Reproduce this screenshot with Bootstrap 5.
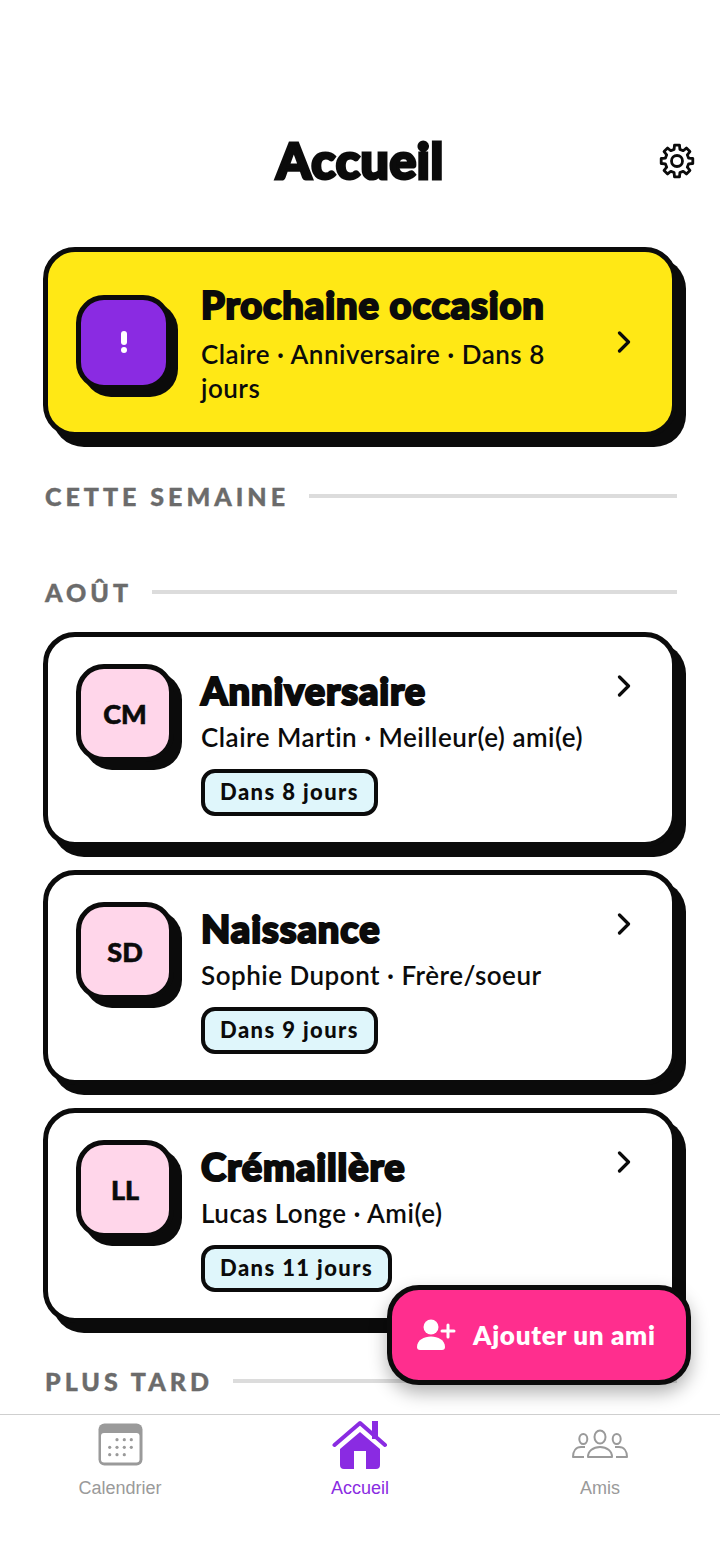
<!DOCTYPE html>
<html lang="fr">
<head>
  <meta charset="UTF-8">
  <meta name="viewport" content="width=device-width, initial-scale=1.0">
  <title>Accueil</title>
  <link href="https://cdn.jsdelivr.net/npm/bootstrap@5.3.3/dist/css/bootstrap.min.css" rel="stylesheet">
  <script src="https://cdn.jsdelivr.net/npm/bootstrap@5.3.3/dist/js/bootstrap.bundle.min.js"></script>
  <style>
    body { font-family: "Lato", "Noto Sans", sans-serif; color: #0b0b0b; background: #fff; }
    .app-shell { width: 720px; height: 1565px; }
    .app-scroll { height: 1414px; padding: 0 43px 0 43px; }

    .heavy { font-family: "Lato", sans-serif; font-weight: 900; color: #0b0b0b; }
    .top-bar { height: 247px; padding-top: 130px; }
    .top-title { font-size: 50px; line-height: 60px; letter-spacing: 0.6px; margin: 0; -webkit-text-stroke: 3px #0b0b0b; }
    .gear-btn { position: absolute; right: 25px; top: 143px; }

    .occ-card { width: 634px; border: 5px solid #0b0b0b; border-radius: 32px; box-shadow: 9px 10px 0 #0b0b0b; background: #fff; padding: 27px 27px 27px 28px; gap: 27px; }
    .occ-next { background: #ffe815; height: 190px; padding-top: 0; padding-bottom: 0; gap: 30px; align-items: center; }
    .occ-item { height: 215px; margin-bottom: 23px; align-items: flex-start; }
    .occ-body { flex: 1 1 0; min-width: 0; }
    .occ-title { font-size: 38px; line-height: 40px; margin: 0; letter-spacing: 0.9px; -webkit-text-stroke: 2.2px #0b0b0b; }
    .occ-sub { font-size: 26px; line-height: 34px; font-weight: 600; margin: 0; letter-spacing: 0.5px; }
    .occ-next .occ-body { padding-top: 5px; }
    .occ-next .occ-title { margin-bottom: 13px; }
    .occ-item .occ-title { margin-bottom: 10px; padding-top: 6px; }
    .occ-chevron { flex: none; width: 14px; margin-right: 14px; }
    .occ-item .occ-chevron { margin-top: 11px; margin-left: -16px; }

    .avatar-box { flex: none; width: 98px; height: 98px; padding-top: 3px; border: 5px solid #0b0b0b; border-radius: 28px; box-shadow: 8px 8px 0 #0b0b0b; background: #ffd6ea; font-size: 27px; font-weight: 900; -webkit-text-stroke: 0.6px #0b0b0b; }
    .avatar-alert { width: 95px; height: 95px; padding-top: 0; background: #8a2be2; box-shadow: 7px 7px 0 #0b0b0b; }

    .due-tag { display: inline-block; height: 47px; margin-top: 15px; padding: 0 15px; border: 4px solid #0b0b0b; border-radius: 14px; background: #dff6fb; font-size: 22px; line-height: 38px; font-weight: 900; letter-spacing: 1.4px; }

    .sect-head { font-size: 25px; line-height: 30px; font-weight: 900; letter-spacing: 4px; color: #6b6b6b; margin: 0; padding-left: 2px; gap: 20px; width: 634px; -webkit-text-stroke: 0.4px #6b6b6b; }
    .sect-rule { flex: 1 1 0; height: 4px; background: #dcdcdc; }
    .sect-week { margin-top: 44px; margin-bottom: 66px; }
    .sect-month { margin-bottom: 25px; }
    .sect-later { margin-top: 43px; }

    .add-friend { position: absolute; left: 387px; top: 1285px; width: 304px; height: 100px; border: 5px solid #0b0b0b; border-radius: 32px; background: #ff2e8e; color: #fff; font-size: 26px; font-weight: 800; letter-spacing: 0.7px; box-shadow: 0 8px 18px rgba(0,0,0,.3); gap: 16px; padding-left: 25px; }
    .add-friend:hover { background: #ff2e8e; color: #fff; border-color: #0b0b0b; }

    .tab-bar { height: 151px; border-top: 1px solid #cfcfcf; background: #fff; position: relative; }
    .tab-item { width: 240px; font-family: "Liberation Sans", sans-serif; font-size: 18px; line-height: 22px; color: #9a9a9a; text-decoration: none; }
    .tab-icon { height: 62px; }
    .tab-friends { padding-top: 13px; }
    .tab-active { color: #8a2be2; }
  </style>
</head>
<body>
  <div class="app-shell position-relative overflow-hidden">
    <div class="app-scroll overflow-hidden">
      <header class="top-bar text-center">
        <h1 class="top-title heavy">Accueil</h1>
      </header>
      <a class="gear-btn" href="#" aria-label="Réglages">
        <svg width="36" height="36" viewBox="0 0 36 36" fill="none" stroke="#0b0b0b" stroke-width="2.8" stroke-linejoin="round">
          <polygon points="15.1,6.36 15.5,2.2 20.5,2.2 20.9,6.36 24.18,7.71 27.4,5.06 30.94,8.6 28.29,11.82 29.64,15.1 33.8,15.5 33.8,20.5 29.64,20.9 28.29,24.18 30.94,27.4 27.4,30.94 24.18,28.29 20.9,29.64 20.5,33.8 15.5,33.8 15.1,29.64 11.82,28.29 8.6,30.94 5.06,27.4 7.71,24.18 6.36,20.9 2.2,20.5 2.2,15.5 6.36,15.1 7.71,11.82 5.06,8.6 8.6,5.06 11.82,7.71"/>
          <circle cx="18" cy="18" r="5.5"/>
        </svg>
      </a>

      <div class="occ-card occ-next d-flex">
        <div class="avatar-box avatar-alert d-flex align-items-center justify-content-center">
          <svg width="8" height="22" viewBox="0 0 8 22" fill="#fff"><rect x="1" y="0" width="6" height="14" rx="3"/><circle cx="4" cy="19" r="3"/></svg>
        </div>
        <div class="occ-body">
          <h2 class="occ-title heavy">Prochaine occasion</h2>
          <p class="occ-sub">Claire · Anniversaire · Dans 8 jours</p>
        </div>
        <svg class="occ-chevron" width="14" height="22" viewBox="0 0 14 22" fill="none" stroke="#0b0b0b" stroke-width="3.2" stroke-linecap="round" stroke-linejoin="round"><path d="M2.5 2 L11.5 11 L2.5 20"/></svg>
      </div>

      <div class="sect-head sect-week d-flex align-items-center"><span>CETTE SEMAINE</span><span class="sect-rule"></span></div>
      <div class="sect-head sect-month d-flex align-items-center"><span>AOÛT</span><span class="sect-rule"></span></div>

      <div class="occ-card occ-item d-flex">
        <div class="avatar-box d-flex align-items-center justify-content-center">CM</div>
        <div class="occ-body">
          <h2 class="occ-title heavy">Anniversaire</h2>
          <p class="occ-sub">Claire Martin · Meilleur(e) ami(e)</p>
          <span class="due-tag">Dans 8 jours</span>
        </div>
        <svg class="occ-chevron" width="14" height="22" viewBox="0 0 14 22" fill="none" stroke="#0b0b0b" stroke-width="3.2" stroke-linecap="round" stroke-linejoin="round"><path d="M2.5 2 L11.5 11 L2.5 20"/></svg>
      </div>

      <div class="occ-card occ-item d-flex">
        <div class="avatar-box d-flex align-items-center justify-content-center">SD</div>
        <div class="occ-body">
          <h2 class="occ-title heavy">Naissance</h2>
          <p class="occ-sub">Sophie Dupont · Frère/soeur</p>
          <span class="due-tag">Dans 9 jours</span>
        </div>
        <svg class="occ-chevron" width="14" height="22" viewBox="0 0 14 22" fill="none" stroke="#0b0b0b" stroke-width="3.2" stroke-linecap="round" stroke-linejoin="round"><path d="M2.5 2 L11.5 11 L2.5 20"/></svg>
      </div>

      <div class="occ-card occ-item d-flex">
        <div class="avatar-box d-flex align-items-center justify-content-center">LL</div>
        <div class="occ-body">
          <h2 class="occ-title heavy">Crémaillère</h2>
          <p class="occ-sub">Lucas Longe · Ami(e)</p>
          <span class="due-tag">Dans 11 jours</span>
        </div>
        <svg class="occ-chevron" width="14" height="22" viewBox="0 0 14 22" fill="none" stroke="#0b0b0b" stroke-width="3.2" stroke-linecap="round" stroke-linejoin="round"><path d="M2.5 2 L11.5 11 L2.5 20"/></svg>
      </div>

      <div class="sect-head sect-later d-flex align-items-center"><span>PLUS TARD</span><span class="sect-rule"></span></div>
    </div>

    <button type="button" class="btn add-friend d-flex align-items-center">
      <svg width="40" height="32" viewBox="0 0 40 32" fill="#fff"><circle cx="14" cy="8" r="7.5"/><path d="M0 28 C0 21 7 17.5 14 17.5 C21 17.5 28 21 28 28 Q28 31 25 31 H3 Q0 31 0 28 Z"/><path d="M31 6 V18 M25 12 H37" stroke="#fff" stroke-width="3" stroke-linecap="round"/></svg>
      <span>Ajouter un ami</span>
    </button>

    <nav class="tab-bar d-flex">
      <a class="tab-item d-flex flex-column align-items-center" href="#">
        <span class="tab-icon d-flex align-items-start pt-2">
          <svg width="45" height="43" viewBox="0 0 45 43"><rect x="0.5" y="0.5" width="44" height="42" rx="6" fill="#9a9a9a"/><rect x="3" y="10" width="38.5" height="29.5" rx="3" fill="#fff"/><g fill="#9a9a9a"><circle cx="19" cy="16.7" r="1.6"/><circle cx="26.3" cy="16.7" r="1.6"/><circle cx="33.3" cy="16.7" r="1.6"/><circle cx="11.7" cy="24.3" r="1.6"/><circle cx="19" cy="24.3" r="1.6"/><circle cx="26.3" cy="24.3" r="1.6"/><circle cx="33.3" cy="24.3" r="1.6"/><circle cx="11.7" cy="31.7" r="1.6"/><circle cx="19" cy="31.7" r="1.6"/><circle cx="26.3" cy="31.7" r="1.6"/></g></svg>
        </span>
        <span>Calendrier</span>
      </a>
      <a class="tab-item tab-active d-flex flex-column align-items-center" href="#">
        <span class="tab-icon d-flex align-items-start pt-1">
          <svg width="56" height="52" viewBox="0 0 56 52" fill="#8a2be2"><path d="M2.5 26 L28 4 L53 26" fill="none" stroke="#8a2be2" stroke-width="4" stroke-linecap="round" stroke-linejoin="round"/><rect x="40" y="2" width="6" height="18"/><path d="M8 30 L28 13 L48 30 V46 a4 4 0 0 1 -4 4 H34 V32 H22 V50 H12 a4 4 0 0 1 -4 -4 Z"/></svg>
        </span>
        <span>Accueil</span>
      </a>
      <a class="tab-item d-flex flex-column align-items-center" href="#">
        <span class="tab-icon tab-friends d-flex align-items-start">
          <svg width="56" height="32" viewBox="0 0 56 32" fill="none" stroke="#9a9a9a" stroke-width="2" stroke-linejoin="round"><ellipse cx="11.3" cy="11" rx="4" ry="5"/><ellipse cx="28" cy="9" rx="5.5" ry="6.5"/><ellipse cx="44.7" cy="11" rx="4" ry="5"/><path d="M16 29 C16 23 21 19 28 19 C35 19 40 23 40 29 Z"/><path d="M13 19 H9 C4 19 1 23 1 29 H12"/><path d="M43 19 H47 C52 19 55 23 55 29 H44"/></svg>
        </span>
        <span>Amis</span>
      </a>
    </nav>
  </div>
</body>
</html>
